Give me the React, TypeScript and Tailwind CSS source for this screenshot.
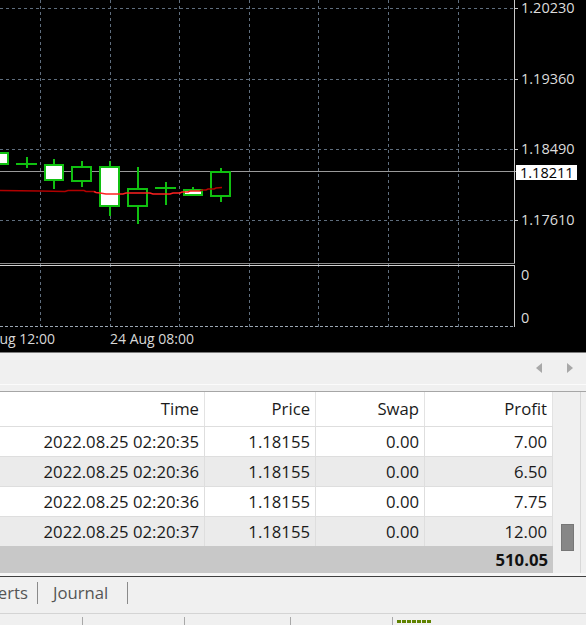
import React from "react";

const GRID = "#5f6e7e";
const VX = [40, 110, 179, 249, 318, 388, 458];
const HY = [8, 79, 149, 220];

type Candle = { x0: number; x1: number; yt: number; yb: number; wt: number; wb: number; kind: "bull" | "bear" | "doji" };

const CANDLES: Candle[] = [
  { x0: -12, x1: 9, yt: 152, yb: 165, wt: 152, wb: 165, kind: "bull" },
  { x0: 16, x1: 37, yt: 163, yb: 165, wt: 157, wb: 168, kind: "doji" },
  { x0: 44, x1: 64, yt: 164, yb: 181, wt: 159, wb: 189, kind: "bull" },
  { x0: 71, x1: 92, yt: 166, yb: 182, wt: 161, wb: 187, kind: "bear" },
  { x0: 99, x1: 120, yt: 166, yb: 207, wt: 161, wb: 216, kind: "bull" },
  { x0: 127, x1: 148, yt: 188, yb: 207, wt: 167, wb: 224, kind: "bear" },
  { x0: 155, x1: 176, yt: 187, yb: 189, wt: 182, wb: 205, kind: "doji" },
  { x0: 183, x1: 203, yt: 189, yb: 196, wt: 187, wb: 196, kind: "bull" },
  { x0: 210, x1: 231, yt: 171, yb: 197, wt: 168, wb: 202, kind: "bear" },
];

const GREEN = "#10c010";

function CandleShape({ c }: { c: Candle }) {
  const cx = Math.round((c.x0 + c.x1) / 2);
  return (
    <g>
      <rect x={cx - 1} y={c.wt} width={2} height={c.wb - c.wt} fill={GREEN} />
      {c.kind === "doji" ? (
        <rect x={c.x0} y={c.yt} width={c.x1 - c.x0} height={2} fill={GREEN} />
      ) : (
        <rect
          x={c.x0 + 1}
          y={c.yt + 1}
          width={c.x1 - c.x0 - 2}
          height={c.yb - c.yt - 2}
          fill={c.kind === "bull" ? "#ffffff" : "#000000"}
          stroke={GREEN}
          strokeWidth={2}
        />
      )}
    </g>
  );
}

function Chart() {
  const maDark1 = "0,190.5 40,191 65,191.5 68,190.5 84,190.5 86,191.5 94,191.5";
  const maBright = "94,191.5 96,192.5 100,193 106,194 123,194 126,193 150,193 153,194 170,194 173,193 180,193 182,192 188,192 190,191 200,191";
  const maDark2 = "200,191 202,190 206,190 208,189 214,189 216,188 222,187.5";
  return (
    <div className="relative h-[352px] shrink-0 bg-black overflow-hidden">
      <svg width="586" height="352" className="absolute left-0 top-0">
        {VX.map((x) => (
          <line key={"v" + x} x1={x + 0.5} y1={0} x2={x + 0.5} y2={330} stroke={GRID} strokeDasharray="3 3" />
        ))}
        {HY.map((y) => (
          <line key={"h" + y} x1={0} y1={y + 0.5} x2={518} y2={y + 0.5} stroke={GRID} strokeDasharray="3 3" />
        ))}
        <line x1={0} y1={171.5} x2={516} y2={171.5} stroke="#9a9a9a" />
        {CANDLES.map((c, i) => (
          <CandleShape key={i} c={c} />
        ))}
        <polyline points={maDark1} fill="none" stroke="#b00000" strokeWidth={1.6} />
        <polyline points={maBright} fill="none" stroke="#ff2020" strokeWidth={1.6} />
        <polyline points={maDark2} fill="none" stroke="#b00000" strokeWidth={1.6} />
        <line x1={0} y1={263.5} x2={515} y2={263.5} stroke="#8a8a8a" />
        <line x1={0} y1={265.5} x2={515} y2={265.5} stroke="#d0d0d0" />
        <line x1={0} y1={326.5} x2={515} y2={326.5} stroke="#9aa6b2" strokeDasharray="3 2" />
        <line x1={514.5} y1={0} x2={514.5} y2={263} stroke="#c8c8c8" />
        <line x1={514.5} y1={265} x2={514.5} y2={327} stroke="#c8c8c8" />
        {HY.map((y) => (
          <line key={"t" + y} x1={514} y1={y + 0.5} x2={518} y2={y + 0.5} stroke="#c8c8c8" />
        ))}
      </svg>
      {[
        ["1.20230", 8],
        ["1.19360", 79],
        ["1.18490", 149],
        ["1.17610", 220],
      ].map(([t, y]) => (
        <span
          key={t as string}
          className="absolute left-[521px] text-[14.5px] leading-[16px] text-[#dcdcdc]"
          style={{ top: (y as number) - 8 }}
        >
          {t}
        </span>
      ))}
      <span className="absolute left-[516px] top-[165px] w-[61px] h-[15px] bg-white text-black text-[14.5px] leading-[15px] pl-[4px]">
        1.18211
      </span>
      <span className="absolute left-[521px] top-[267px] text-[14.5px] leading-[16px] text-[#dcdcdc]">0</span>
      <span className="absolute left-[521px] top-[310px] text-[14.5px] leading-[16px] text-[#dcdcdc]">0</span>
      <span className="absolute left-[-29px] top-[331px] text-[14px] leading-[16px] text-[#d8d8d8] whitespace-nowrap">
        23 Aug 12:00
      </span>
      <span className="absolute left-[110px] top-[331px] text-[14px] leading-[16px] text-[#d8d8d8] whitespace-nowrap">
        24 Aug 08:00
      </span>
    </div>
  );
}

const ROWS = [
  ["2022.08.25 02:20:35", "1.18155", "0.00", "7.00"],
  ["2022.08.25 02:20:36", "1.18155", "0.00", "6.50"],
  ["2022.08.25 02:20:36", "1.18155", "0.00", "7.75"],
  ["2022.08.25 02:20:37", "1.18155", "0.00", "12.00"],
];

const COLS = ["w-[205px]", "w-[111px]", "w-[109px]", "w-[128px]"];

function Table() {
  return (
    <div className="flex shrink-0 border-t border-[#a6a6a6] bg-[#f0f0f0]">
      <div className="w-[553px] flex flex-col text-[16.7px] text-[#1a1a1a]">
        <div className="flex h-[34px] bg-white">
          {["Time", "Price", "Swap", "Profit"].map((h, i) => (
            <div
              key={h}
              className={`${COLS[i]} flex items-center justify-end pr-[5px] border-r border-[#e3e3e3]`}
            >
              {h}
            </div>
          ))}
        </div>
        {ROWS.map((r, ri) => (
          <div
            key={ri}
            className={`flex h-[30px] border-t border-[#dedede] ${ri % 2 === 0 ? "bg-white" : "bg-[#ebebeb]"}`}
          >
            {r.map((c, i) => (
              <div
                key={i}
                className={`${COLS[i]} flex items-center justify-end pr-[5px] border-r border-[#dedede]`}
              >
                {c}
              </div>
            ))}
          </div>
        ))}
        <div className="flex h-[27px] bg-[#c8c8c8] items-center justify-end pr-[5px] font-bold text-[#111]">
          510.05
        </div>
      </div>
      <div className="w-[27px] relative flex flex-col">
        <div className="flex-1" />
        <div className="h-[27px] w-[13px] ml-[8px] mb-[22px] bg-[#878787] border border-[#777]" />
      </div>
      <div className="w-[6px] border-l border-[#d8d8d8]" />
    </div>
  );
}

export default function App() {
  return (
    <div className="w-[586px] h-[625px] overflow-hidden bg-[#f0f0f0] font-['Open_Sans',sans-serif] flex flex-col">
      <Chart />
      <div className="h-[39px] shrink-0 border-t border-[#7c7c7c] flex flex-col">
        <div className="h-[31px] flex items-start justify-end gap-[25px] pr-[13px] pt-[10px]">
          <svg width="6" height="10">
            <path d="M6 0 L0 5 L6 10Z" fill="#a8a8a8" />
          </svg>
          <svg width="6" height="10">
            <path d="M0 0 L6 5 L0 10Z" fill="#a8a8a8" />
          </svg>
        </div>
        <div className="h-px bg-[#fbfbfb]" />
      </div>
      <Table />
      <div className="h-[3px] shrink-0 bg-[#f7f7f7]" />
      <div className="h-px shrink-0 bg-[#404040]" />
      <div className="h-[36px] shrink-0 flex items-center pb-[5px] text-[16.7px] text-[#555]">
        <span className="ml-[-17px] w-[54px] whitespace-nowrap">Alerts</span>
        <div className="w-px h-[22px] bg-[#8a8a8a]" />
        <span className="ml-[15px] w-[74px]">Journal</span>
        <div className="w-px h-[22px] bg-[#8a8a8a]" />
      </div>
      <div className="h-px shrink-0 bg-[#d4d4d4]" />
      <div className="flex-1 flex items-stretch">
        <div className="w-[82px]" />
        <div className="w-px bg-[#a8a8a8] mt-[3px]" />
        <div className="w-[101px]" />
        <div className="w-px bg-[#a8a8a8] mt-[3px]" />
        <div className="w-[105px]" />
        <div className="w-px bg-[#a8a8a8] mt-[3px]" />
        <div className="w-[101px]" />
        <div className="w-px bg-[#a8a8a8] mt-[3px]" />
        <div className="ml-[4px] mt-[6px] flex gap-px h-[3px]">
          {[0, 1, 2, 3, 4, 5, 6].map((i) => (
            <div key={i} className="w-[4px] h-[3px] bg-[#5f8200]" />
          ))}
        </div>
      </div>
    </div>
  );
}
